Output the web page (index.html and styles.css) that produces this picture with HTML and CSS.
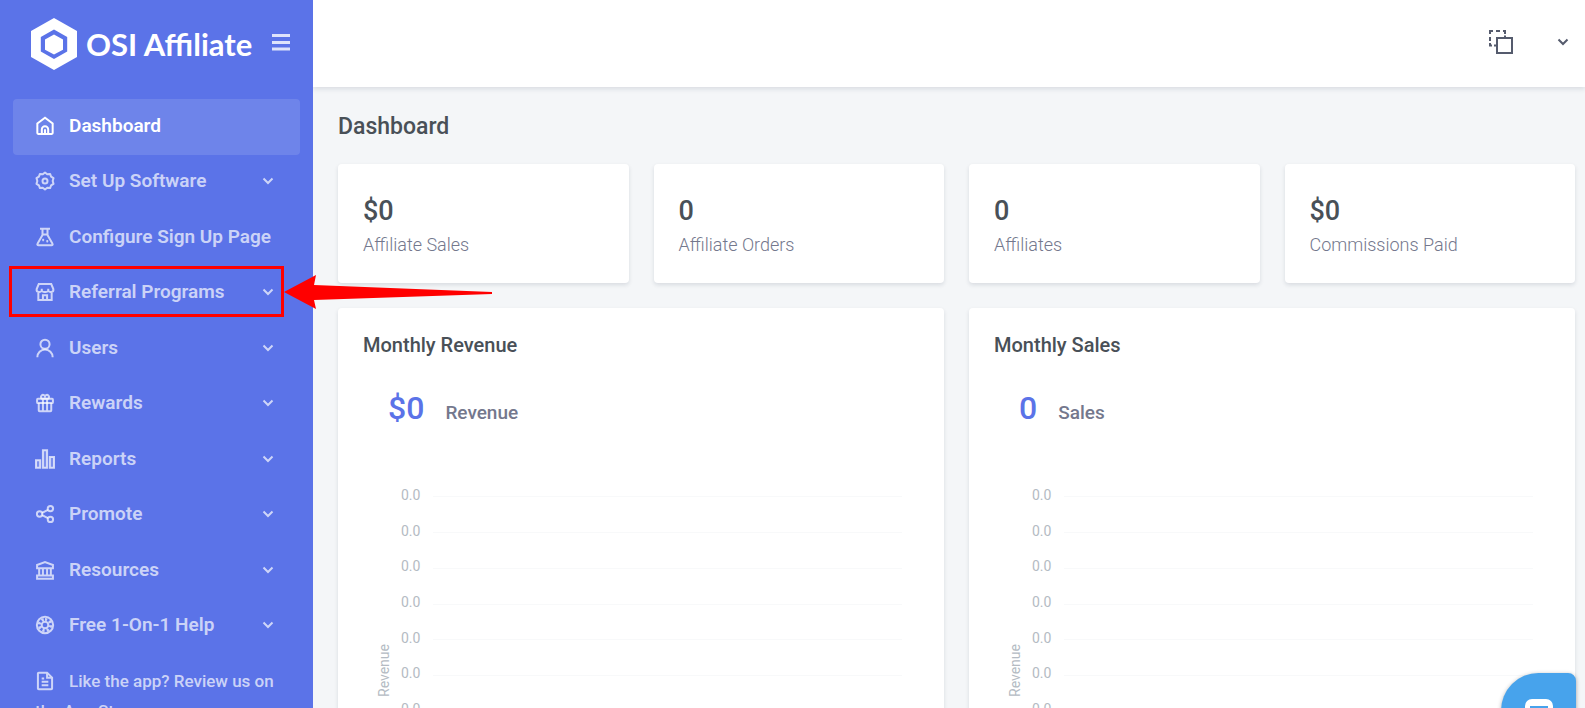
FILE: index.html
```
<!DOCTYPE html>
<html lang="en">
<head>
<meta charset="utf-8">
<title>Dashboard - OSI Affiliate</title>
<meta name="viewport" content="width=device-width, initial-scale=1">
<link rel="stylesheet" href="styles.css">
</head>
<body>
<svg class="sprite" aria-hidden="true">
  <symbol id="chevron" viewBox="0 0 12 12"><path d="M1.500 3.500 6 8l4.500-4.500" fill="none" stroke="currentColor" stroke-width="2"/></symbol>
</svg>
<div class="app">
  <aside class="sidebar">
    <div class="brand">
      <a class="logo" href="#">
        <svg class="logo-mark" viewBox="0 0 46 52" aria-hidden="true">
          <path fill="#fff" fill-rule="evenodd" d="M23 0 46 13v26L23 52 0 39V13zM23 11.500 9.800 19v14.500L23 41l13.200-7.500V19z"/>
          <path fill="#fff" d="M23 16.500 32 21.500v10.200L23 36.500l-9-4.800V21.500z"/>
        </svg>
        <span>OSI Affiliate</span>
      </a>
      <button class="burger" type="button" aria-label="Toggle menu">
        <svg viewBox="0 0 18 17" aria-hidden="true"><path d="M0 1.500h18M0 8.500h18M0 15h18" stroke="currentColor" stroke-width="3"/></svg>
      </button>
    </div>
    <nav>
      <ul class="menu">
        <li><a class="active" href="#">
          <svg class="icon" viewBox="0 0 24 24"><path d="M2.800 9 12 2l9.200 7v11.500a1 1 0 0 1-1 1H3.800a1 1 0 0 1-1-1zM8.200 21v-5a3.800 3.800 0 0 1 7.600 0v5M12 16v5"/></svg>
          <span>Dashboard</span></a></li>
        <li><a href="#">
          <svg class="icon" viewBox="0 0 24 24"><circle cx="12" cy="12" r="3"/><path stroke-linejoin="round" d="M9.300 4 12 1.800 14.700 4l3.400-.5 1.200 3.200 2.900 1.900L21.200 12l1 3.400-2.900 1.900-1.200 3.200-3.400-.5L12 22.200 9.300 20l-3.400.5-1.200-3.200-2.900-1.900 1-3.400-1-3.400 2.900-1.900 1.200-3.200z"/></svg>
          <span>Set Up Software</span><svg class="chevron"><use href="#chevron"/></svg></a></li>
        <li><a href="#">
          <svg class="icon" viewBox="0 0 24 24"><path d="M6 2h12M9 2v7.500L3 20a1.300 1.300 0 0 0 1.100 2h15.800a1.300 1.300 0 0 0 1.100-2L15 9.500V2M9 9h6"/><path d="M8.500 15.500h2.500M13.500 17h2.500M9.800 14v3M14.700 15.500v3" stroke-width="1.500"/></svg>
          <span>Configure Sign Up Page</span></a></li>
        <li class="highlighted"><a href="#">
          <svg class="icon" viewBox="0 0 24 24"><path d="M4.500 2.500h15l2.500 6a3 3 0 0 1-2.300 3.500 3.500 3.500 0 0 1-3.800-1.500 4 4 0 0 1-3.900 1.500 4 4 0 0 1-3.900-1.500A3.500 3.500 0 0 1 4.300 12 3 3 0 0 1 2 8.500zM4 12v9.500h16V12M9.500 21.500V16h5v5.500M8.100 11V8M15.900 11V8"/></svg>
          <span>Referral Programs</span><svg class="chevron"><use href="#chevron"/></svg></a>
          <svg class="arrow" viewBox="0 0 208 34" aria-hidden="true"><path fill="#f00" d="M0 17 32 0l-2 10 178 7v2L30 25l2 9z"/></svg></li>
        <li><a href="#">
          <svg class="icon" viewBox="0 0 24 24"><circle cx="12" cy="7.500" r="5.500"/><path d="M2.800 23a9.200 9.200 0 0 1 18.400 0"/></svg>
          <span>Users</span><svg class="chevron"><use href="#chevron"/></svg></a></li>
        <li><a href="#">
          <svg class="icon" viewBox="0 0 24 24"><rect x="2.500" y="7" width="19" height="5" rx="1"/><path d="M4.500 12v9a1 1 0 0 0 1 1h13a1 1 0 0 0 1-1v-9M9.500 7v15M14.500 7v15M12 7H8.500A2.500 2.500 0 1 1 12 4a2.500 2.500 0 1 1 3.500 3z"/></svg>
          <span>Rewards</span><svg class="chevron"><use href="#chevron"/></svg></a></li>
        <li><a href="#">
          <svg class="icon" viewBox="0 0 24 24"><path fill="currentColor" fill-opacity=".3" d="M1.200 13.500h5v9h-5zM9.500 1.500h5v21h-5zM17.800 9.500h5v13h-5z"/></svg>
          <span>Reports</span><svg class="chevron"><use href="#chevron"/></svg></a></li>
        <li><a href="#">
          <svg class="icon" viewBox="0 0 24 24"><circle cx="5.500" cy="12" r="3.200"/><circle cx="18.500" cy="5.500" r="3.200"/><circle cx="18.500" cy="18.500" r="3.200"/><path d="m8.500 10.700 7-3.700M8.500 13.300l7 3.700"/></svg>
          <span>Promote</span><svg class="chevron"><use href="#chevron"/></svg></a></li>
        <li><a href="#">
          <svg class="icon" viewBox="0 0 24 24"><path d="M1.500 22.500h21M2.500 18.500h19v4h-19zM2.500 6 12 2.500 21.500 6v4h-19zM5 10v8M9.500 10v8M14.500 10v8M19 10v8"/></svg>
          <span>Resources</span><svg class="chevron"><use href="#chevron"/></svg></a></li>
        <li><a href="#">
          <svg class="icon" viewBox="0 0 24 24"><circle cx="12" cy="12" r="9.800"/><circle cx="12" cy="12" r="4"/><path stroke-width="3.500" stroke-dasharray="2.700 2.640" d="M12 5.200a6.800 6.800 0 1 1 0 13.600 6.800 6.800 0 0 1 0-13.600z"/></svg>
          <span>Free 1-On-1 Help</span><svg class="chevron"><use href="#chevron"/></svg></a></li>
        <li class="review"><a href="#"><svg class="icon" viewBox="0 0 24 24"><path d="M14.500 2H4.500a1 1 0 0 0-1 1v18a1 1 0 0 0 1 1h15a1 1 0 0 0 1-1V8zM14.500 2v6H20M8 9h3M8 13h8M8 17h8"/></svg>Like the app? Review us on the App Store</a></li>
      </ul>
    </nav>
  </aside>

  <div class="page">
    <header class="topbar">
      <button class="tool" type="button" aria-label="Copy">
        <svg viewBox="0 0 24 24" fill="none" stroke="currentColor" stroke-width="2" aria-hidden="true"><path d="M8 8h15v15H8z"/><path d="M1 4V1h3M7 1h4M14 1h2v3M1 7v4M1 13v2.500h2M5 15.500h2M16 5.500V8"/></svg>
      </button>
      <button class="tool account" type="button" aria-label="Account menu"><svg class="chevron"><use href="#chevron"/></svg></button>
    </header>

    <main class="content">
      <h1>Dashboard</h1>
      <section class="stats">
        <div class="card stat"><strong>$0</strong><span>Affiliate Sales</span></div>
        <div class="card stat"><strong>0</strong><span>Affiliate Orders</span></div>
        <div class="card stat"><strong>0</strong><span>Affiliates</span></div>
        <div class="card stat"><strong>$0</strong><span>Commissions Paid</span></div>
      </section>
      <section class="panels">
        <article class="card panel">
          <h2>Monthly Revenue</h2>
          <p class="total"><strong>$0</strong><span>Revenue</span></p>
          <div class="chart">
            <div class="axis-title">Revenue</div>
            <ol class="ticks"><li>0.0</li><li>0.0</li><li>0.0</li><li>0.0</li><li>0.0</li><li>0.0</li><li>0.0</li><li>0.0</li><li>0.0</li><li>0.0</li><li>0.0</li></ol>
          </div>
        </article>
        <article class="card panel">
          <h2>Monthly Sales</h2>
          <p class="total"><strong>0</strong><span>Sales</span></p>
          <div class="chart">
            <div class="axis-title">Revenue</div>
            <ol class="ticks"><li>0.0</li><li>0.0</li><li>0.0</li><li>0.0</li><li>0.0</li><li>0.0</li><li>0.0</li><li>0.0</li><li>0.0</li><li>0.0</li><li>0.0</li></ol>
          </div>
        </article>
      </section>
    </main>
  </div>
</div>
<button class="chat" type="button" aria-label="Open chat">
  <svg viewBox="0 0 28 28" aria-hidden="true"><path fill="#fff" d="M7 0h14a7 7 0 0 1 7 7v14l-6-3H7a7 7 0 0 1-7-7V7a7 7 0 0 1 7-7z"/><path d="M5 8h18M5 13h18" stroke="#47a3ec" stroke-width="2"/></svg>
</button>
</body>
</html>
```
FILE: styles.css
```
* { box-sizing: border-box; }

body {
  margin: 0;
  font-family: Roboto, "Liberation Sans", sans-serif;
  background: #f4f6f8;
  color: #495057;
}

h1, h2, p, ul, ol { margin: 0; padding: 0; }
ul, ol { list-style: none; }
a { color: inherit; text-decoration: none; }
button { padding: 0; border: 0; background: none; color: inherit; cursor: pointer; }
svg { display: block; }
.sprite { display: none; }

.app {
  display: flex;
  height: 100vh;
  overflow: hidden;
}

/* Sidebar */
.sidebar {
  flex: 0 0 313px;
  position: relative;
  z-index: 2;
  padding: 0 13px;
  background: #5b73e8;
  color: rgba(255, 255, 255, 0.7);
}

.brand {
  display: flex;
  align-items: center;
  justify-content: space-between;
  height: 99px;
  padding: 0 10px 12px 18px;
}

.logo {
  display: flex;
  align-items: center;
  gap: 9px;
  color: #fff;
  font: 700 31px/40px Lato, sans-serif;
}

.logo-mark { width: 46px; height: 52px; }
.burger { padding-bottom: 2px; color: rgba(255, 255, 255, 0.8); }
.burger svg { width: 18px; height: 17px; }

.menu {
  display: grid;
  grid-template-rows: repeat(10, minmax(55px, 1fr)) auto;
  min-height: 627px;
}

.menu a {
  display: flex;
  align-items: center;
  height: 100%;
  padding: 0 26px 2px 22px;
  border-radius: 4px;
  font-size: 19px;
  font-weight: 600;
  line-height: 28px;
}

.menu a.active { background: rgba(255, 255, 255, 0.12); color: #fff; }

.icon {
  flex: none;
  width: 20px;
  height: 20px;
  margin-right: 14px;
  fill: none;
  stroke: currentColor;
  stroke-width: 2.4;
}

.chevron { width: 12px; height: 12px; margin-left: auto; }

.menu .review a {
  display: block;
  padding: 12px 26px 0 22px;
  font-size: 17px;
  font-weight: 500;
  line-height: 30px;
}

.review .icon { display: inline-block; vertical-align: -4px; }

/* Callout around the highlighted entry */
.highlighted { position: relative; }

.highlighted::before {
  content: "";
  position: absolute;
  inset: 0 16px 4px -4px;
  border: 3px solid #f00;
  pointer-events: none;
}

.arrow {
  position: absolute;
  top: 9px;
  left: 271px;
  width: 208px;
  height: 34px;
}

/* Page */
.page {
  flex: 1;
  min-width: 0;
}

.topbar {
  position: relative;
  display: flex;
  align-items: center;
  justify-content: flex-end;
  gap: 44px;
  height: 87px;
  padding: 0 16px 3px 0;
  background: #fff;
  color: #555b6d;
  box-shadow: 0 2px 5px rgba(15, 34, 58, 0.12);
}

.tool svg { width: 24px; height: 24px; }
.tool .chevron { width: 12px; height: 12px; }

.content { padding: 26px 10px 25px 25px; }

h1 {
  margin-bottom: 23px;
  font-size: 23px;
  font-weight: 500;
  line-height: 28px;
}

.card {
  border-radius: 4px;
  background: #fff;
  box-shadow: 0 2px 4px rgba(15, 34, 58, 0.12);
}

.stats {
  display: grid;
  grid-template-columns: repeat(4, 1fr);
  gap: 25px;
  margin-bottom: 25px;
}

.stat {
  display: flex;
  flex-direction: column;
  gap: 6px;
  padding: 31px 25px 26px;
}

.stat strong { font-size: 27px; font-weight: 500; line-height: 32px; }
.stat span { color: #74788d; font-size: 18px; font-weight: 300; line-height: 24px; }

.panels {
  display: grid;
  grid-template-columns: repeat(2, 1fr);
  gap: 25px;
}

.panel { padding: 25px; }

h2 { font-size: 20px; font-weight: 500; line-height: 24px; }

.total {
  display: flex;
  align-items: baseline;
  gap: 21px;
  padding: 32px 25px 0;
  line-height: 38px;
}

.total strong { color: #5b73e8; font-size: 32px; font-weight: 500; }
.total span { color: #74788d; font-size: 19px; font-weight: 500; }

.chart {
  display: flex;
  align-items: center;
  gap: 9px;
  padding: 45px 17px 0 13px;
  color: #b4bbc3;
  font-size: 14px;
}

.axis-title {
  padding-top: 6px;
  writing-mode: vertical-rl;
  rotate: 180deg;
  line-height: 16px;
}

.ticks {
  flex: 1;
  display: grid;
  grid-auto-rows: 1fr;
  height: 393px;
}

.ticks li {
  display: flex;
  align-items: center;
  gap: 13px;
}

.ticks li::after {
  content: "";
  flex: 1;
  height: 1px;
  margin-top: 4px;
  background: #f8f9fa;
}

/* Chat launcher */
.chat {
  position: fixed;
  right: 9px;
  bottom: -40px;
  z-index: 3;
  width: 75px;
  height: 75px;
  padding: 26px 24px;
  border-radius: 38px 8px 38px 38px;
  background: #47a3ec;
  box-shadow: 0 1px 4px rgba(0, 0, 0, 0.3);
}

.chat svg { width: 28px; height: 28px; }
```
